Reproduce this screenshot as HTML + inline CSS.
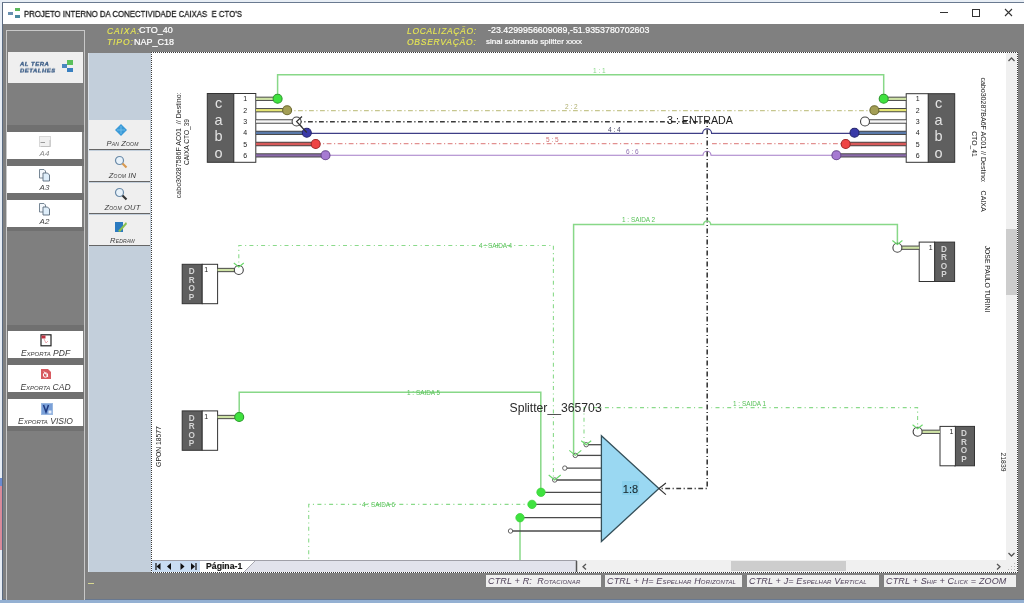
<!DOCTYPE html>
<html><head><meta charset="utf-8">
<style>
*{margin:0;padding:0;box-sizing:border-box}
body>*{will-change:transform}
html,body{width:1024px;height:603px;overflow:hidden;background:#e8eef5;font-family:"Liberation Sans",sans-serif}
.a{position:absolute}
#win{left:2px;top:2px;width:1022px;height:598px;background:#808080;border-left:1px solid #5a6a80;border-top:1px solid #6a7a90;border-bottom:1px solid #687890}
#desk{left:0;top:0;width:2px;height:603px;background:#e6ecf4}
#title{left:3px;top:3px;width:1021px;height:21px;background:#fff}
.ttl{left:24px;top:8.5px;font-size:9px;color:#1a1a1a;-webkit-text-stroke:0.3px #1a1a1a;white-space:nowrap;transform:scaleX(0.865);transform-origin:0 0}
.lbl{font-style:italic;color:#e8e852;-webkit-text-stroke:0.1px #e8e852;font-size:8.5px;white-space:nowrap;letter-spacing:0.9px}
.val{color:#fff;font-size:9px;white-space:nowrap;-webkit-text-stroke:0.2px #fff}
.btn{background:#fff}
.sc{font-style:italic;font-variant:small-caps;font-size:8px;color:#333;white-space:nowrap;text-align:center}
#lp{left:6px;top:30px;width:79px;height:570px;border:1px solid #c8c8c8;border-bottom:none;background:#7f7f7f}
#p2{left:88px;top:53px;width:63px;height:519px;background:#c3cfdb;border-left:1px solid #dde3ea}
.pb{left:89px;width:61px;background:#efefef;border-bottom:1px solid #666}
#canvas{left:151px;top:52px;width:867px;height:521px;background:#fff;border:1px dotted #3a3a3a}
.hint{background:#efefef;height:12px;top:575px;font-style:italic;font-variant:small-caps;font-size:9px;letter-spacing:0.15px;color:#4e4058;white-space:nowrap;padding-left:2px;line-height:12px}
</style></head>
<body>
<div id="desk" class="a"></div>
<div class="a" style="left:0;top:600px;width:1024px;height:3px;background:#94b0d2"></div>
<div id="win" class="a"></div>
<div class="a" style="left:0;top:478px;width:2px;height:8px;background:#6a8ad0"></div>
<div class="a" style="left:0;top:486px;width:2px;height:64px;background:#d88a9a"></div>
<div id="title" class="a"></div>
<!-- title icon -->
<div class="a" style="left:15px;top:8px;width:5px;height:3px;background:#5cb85c"></div>
<div class="a" style="left:8px;top:12px;width:5px;height:3px;background:#6a90b0"></div>
<div class="a" style="left:15px;top:15px;width:5px;height:3px;background:#4a8aa0"></div>
<div class="a ttl">PROJETO INTERNO DA CONECTIVIDADE CAIXAS&nbsp; E CTO'S</div>
<!-- window buttons -->
<div class="a" style="left:940px;top:12px;width:8px;height:1.2px;background:#333"></div>
<div class="a" style="left:971.5px;top:9px;width:8px;height:8px;border:1.2px solid #333"></div>
<svg class="a" style="left:1004px;top:8px" width="9" height="9"><path d="M1 1L8 8M8 1L1 8" stroke="#333" stroke-width="1.1"/></svg>

<!-- header info -->
<div class="a lbl" style="left:107px;top:25.5px">CAIXA:</div>
<div class="a val" style="left:139px;top:25px">CTO_40</div>
<div class="a lbl" style="left:107px;top:36.8px">TIPO:</div>
<div class="a val" style="left:134px;top:36.5px">NAP_C18</div>
<div class="a lbl" style="left:407px;top:25.5px;letter-spacing:0.65px">LOCALIZAÇÃO:</div>
<div class="a val" style="left:487.5px;top:24.5px;font-size:8.9px">-23.4299956609089,-51.9353780702603</div>
<div class="a lbl" style="left:407px;top:37.2px;letter-spacing:0.75px">OBSERVAÇÃO:</div>
<div class="a val" style="left:486px;top:37px;font-size:8px">sinal sobrando splitter xxxx</div>

<!-- left panel -->
<div id="lp" class="a"></div>
<div class="a" style="left:8px;top:52px;width:75px;height:31px;background:#efefef"></div>
<div class="a" style="left:20px;top:61.3px;font-size:5.9px;line-height:6.6px;font-style:italic;font-weight:bold;color:#3a5c86;-webkit-text-stroke:0.35px #3a5c86;letter-spacing:0.55px;transform:scaleY(0.95);transform-origin:0 0">AL TERA<br>DETALHES</div>
<svg class="a" style="left:61px;top:59px" width="13" height="14"><rect x="6" y="1" width="6" height="5" fill="#5bc05b"/><rect x="1" y="5" width="5" height="4" fill="#4a88c0"/><rect x="6" y="9" width="6" height="4" fill="#3a80c0"/></svg>
<div class="a" style="left:7px;top:125px;width:77px;height:7px;background:#707070"></div>
<div class="a" style="left:7px;top:159px;width:77px;height:7px;background:#707070"></div>
<div class="a" style="left:7px;top:193px;width:77px;height:7px;background:#707070"></div>
<div class="a" style="left:7px;top:227px;width:77px;height:4px;background:#707070"></div>
<div class="a btn" style="left:7px;top:132px;width:75px;height:27px"></div>
<div class="a btn" style="left:7px;top:166px;width:75px;height:27px"></div>
<div class="a btn" style="left:7px;top:200px;width:75px;height:27px"></div>
<svg class="a" style="left:38px;top:135px" width="14" height="13"><rect x="1.5" y="1.5" width="11" height="10" fill="#f0f0f0" stroke="#d8d8d8"/><path d="M2.5 7.5H7" stroke="#9a9a9a"/><path d="M12 5V11.5H3" fill="none" stroke="#c0c0c0"/></svg>
<div class="a sc" style="left:7px;top:148.5px;width:75px;font-size:8px;color:#8a8a8a">A4</div>
<svg class="a" style="left:38px;top:168px" width="14" height="14"><path d="M1.5 1.5H6L7.5 3V10H1.5Z" fill="#f4f8fc" stroke="#6a7a8a" stroke-width="0.9"/><path d="M5 5H9.5L11.5 7V13H5Z" fill="#dfeefa" stroke="#5a6a7a" stroke-width="0.9"/></svg>
<div class="a sc" style="left:7px;top:182.5px;width:75px;font-size:8px;color:#444">A3</div>
<svg class="a" style="left:38px;top:202px" width="14" height="14"><path d="M1.5 1.5H6L7.5 3V10H1.5Z" fill="#f4f8fc" stroke="#6a7a8a" stroke-width="0.9"/><path d="M5 5H9.5L11.5 7V13H5Z" fill="#dfeefa" stroke="#5a6a7a" stroke-width="0.9"/></svg>
<div class="a sc" style="left:7px;top:216.5px;width:75px;font-size:8px;color:#444">A2</div>

<div class="a" style="left:7px;top:325px;width:77px;height:6px;background:#707070"></div>
<div class="a" style="left:7px;top:358px;width:77px;height:7px;background:#707070"></div>
<div class="a" style="left:7px;top:392px;width:77px;height:7px;background:#707070"></div>
<div class="a" style="left:7px;top:426px;width:77px;height:5px;background:#707070"></div>
<div class="a btn" style="left:8px;top:331px;width:75px;height:27px"></div>
<div class="a btn" style="left:8px;top:365px;width:75px;height:27px"></div>
<div class="a btn" style="left:8px;top:399px;width:75px;height:27px"></div>
<svg class="a" style="left:40px;top:334px" width="12" height="13"><rect x="1" y="0.8" width="10" height="11" fill="#fff" stroke="#222" stroke-width="1.2"/><rect x="1.5" y="1.5" width="4" height="3" fill="#c03040"/><path d="M4 5L6 9L8 7" fill="none" stroke="#e8a0a8" stroke-width="0.9"/></svg>
<div class="a sc" style="left:8px;top:347.8px;width:75px;font-size:8.5px;letter-spacing:0px;color:#3a3a3a">Exporta PDF</div>
<svg class="a" style="left:40px;top:368px" width="12" height="12"><path d="M1 1H8L11 4V11H1Z" fill="#d85a60"/><circle cx="5.5" cy="7" r="2.2" fill="none" stroke="#fff" stroke-width="1"/><path d="M4 3.5L8 9" stroke="#fff" stroke-width="0.9"/></svg>
<div class="a sc" style="left:8px;top:381.8px;width:75px;font-size:8.5px;letter-spacing:0px;color:#3a3a3a">Exporta CAD</div>
<svg class="a" style="left:40.5px;top:402.5px" width="12" height="12"><rect x="0.5" y="0.5" width="11" height="11" fill="#7aa0d8" stroke="#9ab8e0"/><path d="M2.5 2L5 9L7.5 2" fill="none" stroke="#1e3a80" stroke-width="1.5"/><rect x="7.5" y="7.5" width="3" height="3" fill="#e6eefa"/></svg>
<div class="a sc" style="left:8px;top:415.8px;width:75px;font-size:8.5px;letter-spacing:0px;color:#3a3a3a">Exporta VISIO</div>

<!-- panel 2 -->
<div id="p2" class="a"></div>
<div class="a pb" style="top:120px;height:30px"></div>
<div class="a pb" style="top:151px;height:31px"></div>
<div class="a pb" style="top:183px;height:31px"></div>
<div class="a pb" style="top:215px;height:31px"></div>
<svg class="a" style="left:114px;top:123px" width="14" height="14"><path d="M7 1L13 7L7 13L1 7Z" fill="#3a9ad8"/><path d="M7 3V11M3 7H11" stroke="#7cc4ee" stroke-width="0.8"/></svg>
<div class="a sc" style="left:91.5px;top:139px;width:61px;font-size:7.6px;letter-spacing:0.15px;color:#3a3a3a">Pan Zoom</div>
<svg class="a" style="left:114px;top:155px" width="14" height="14"><circle cx="5.5" cy="5.5" r="4" fill="#e8f2fa" stroke="#6a8aa8" stroke-width="1.2"/><path d="M8.5 8.5L12.5 12.5" stroke="#d89a50" stroke-width="2.2"/></svg>
<div class="a sc" style="left:91.5px;top:171px;width:61px;font-size:7.6px;letter-spacing:0.15px;color:#3a3a3a">Zoom IN</div>
<svg class="a" style="left:114px;top:187px" width="14" height="14"><circle cx="5.5" cy="5.5" r="4" fill="#e8f2fa" stroke="#6a8aa8" stroke-width="1.2"/><path d="M8.5 8.5L12.5 12.5" stroke="#333" stroke-width="2.2"/></svg>
<div class="a sc" style="left:91.5px;top:203px;width:61px;font-size:7.6px;letter-spacing:0.15px;color:#3a3a3a">Zoom OUT</div>
<svg class="a" style="left:114px;top:220px" width="14" height="14"><path d="M1 2H9V12H1Z" fill="#2a7ac0"/><path d="M4 11L12 2L13 4L6 12Z" fill="#8ac050"/></svg>
<div class="a sc" style="left:91.5px;top:236px;width:61px;font-size:7.6px;letter-spacing:0.15px;color:#3a3a3a">Redraw</div>

<!-- canvas -->
<div id="canvas" class="a"></div>
<svg class="a" style="will-change:transform;left:152px;top:53px;font-family:'Liberation Sans',sans-serif" width="854" height="507" viewBox="152 53 854 507">
<path d="M277.6 98.7V74.8H883.7V99" fill="none" stroke="#88d888" stroke-width="1.5"/>
<text x="593" y="72.5" font-size="6.5" fill="#8ad88a" text-anchor="start" >1 : 1</text>
<path d="M287 110.6H874" fill="none" stroke="#c6c68e" stroke-width="1.3" stroke-dasharray="4.8 2.5 1.2 2.5"/>
<text x="565" y="108.5" font-size="6.5" fill="#b0b070" text-anchor="start" >2 : 2</text>
<path d="M306.8 133.3H702.6A4.5 4.5 0 0 1 711.6 133.3H854.5" fill="none" stroke="#3e3e86" stroke-width="1.2"/>
<text x="608" y="131.5" font-size="6.5" fill="#404060" text-anchor="start" >4 : 4</text>
<path d="M315.7 143.6H702M712 143.6H845.7" fill="none" stroke="#e29090" stroke-width="1.3" stroke-dasharray="4.8 2.5 1.2 2.5"/>
<text x="546" y="141.5" font-size="6.5" fill="#d07070" text-anchor="start" >5 : 5</text>
<path d="M325.5 155.3H703A4 4 0 0 1 711 155.3H836.4" fill="none" stroke="#a47cc8" stroke-width="1.1"/>
<text x="626" y="153.5" font-size="6.5" fill="#9070b0" text-anchor="start" >6 : 6</text>
<path d="M297 121.8H707.2V488.5H659" fill="none" stroke="#3a3a3a" stroke-width="1.6" stroke-dasharray="4.8 2.5 1.2 2.5"/>
<path d="M897.4 247.7V224.5H710.7A3.6 3.6 0 0 0 703.5 224.5H573.6V455.4" fill="none" stroke="#88d888" stroke-width="1.5"/>
<text x="622" y="221.5" font-size="6.4" fill="#58c258" text-anchor="start" >1 : SAIDA 2</text>
<path d="M238.8 270V245.5H553.4V480" fill="none" stroke="#8ada8a" stroke-width="1.1" stroke-dasharray="4 3.4 1.1 3.2"/>
<text x="479" y="247.5" font-size="6.4" fill="#58c258" text-anchor="start" >4 : SAIDA 4</text>
<path d="M239.2 417V392.3H540.8V492.3" fill="none" stroke="#88d888" stroke-width="1.5"/>
<text x="407" y="394.5" font-size="6.4" fill="#58c258" text-anchor="start" >1 : SAIDA 5</text>
<path d="M917.6 431.8V407.6H711.5M702.5 407.6H584V444.7" fill="none" stroke="#8ada8a" stroke-width="1.1" stroke-dasharray="4 3.4 1.1 3.2"/>
<text x="733" y="405.5" font-size="6.4" fill="#58c258" text-anchor="start" >1 : SAIDA 1</text>
<path d="M532 504.4H308.7V560" fill="none" stroke="#8ada8a" stroke-width="1.1" stroke-dasharray="4 3.4 1.1 3.2"/>
<text x="362" y="506.5" font-size="6.4" fill="#58c258" text-anchor="start" >4 : SAIDA 6</text>
<path d="M520 517.7V560" fill="none" stroke="#88d888" stroke-width="1.5"/>
<rect x="207.3" y="93.5" width="26.5" height="68.8" fill="#5f5f5f" stroke="#333" stroke-width="1"/>
<rect x="233.8" y="93.5" width="22" height="68.8" fill="#fff" stroke="#333" stroke-width="1"/>
<text x="218.6" y="108" font-size="14.5" fill="#e4e4e4" text-anchor="middle" >c</text>
<text x="218.6" y="124.8" font-size="14.5" fill="#e4e4e4" text-anchor="middle" >a</text>
<text x="218.6" y="141.3" font-size="14.5" fill="#e4e4e4" text-anchor="middle" >b</text>
<text x="218.6" y="158" font-size="14.5" fill="#e4e4e4" text-anchor="middle" >o</text>
<text x="245.3" y="101.3" font-size="7" fill="#222" text-anchor="middle" >1</text>
<text x="245.3" y="112.7" font-size="7" fill="#222" text-anchor="middle" >2</text>
<text x="245.3" y="124" font-size="7" fill="#222" text-anchor="middle" >3</text>
<text x="245.3" y="135.3" font-size="7" fill="#222" text-anchor="middle" >4</text>
<text x="245.3" y="146.5" font-size="7" fill="#222" text-anchor="middle" >5</text>
<text x="245.3" y="157.8" font-size="7" fill="#222" text-anchor="middle" >6</text>
<rect x="928.2" y="93.7" width="26.5" height="68.6" fill="#5f5f5f" stroke="#333" stroke-width="1"/>
<rect x="906.2" y="93.7" width="22" height="68.6" fill="#fff" stroke="#333" stroke-width="1"/>
<text x="938.5" y="108" font-size="14.5" fill="#e4e4e4" text-anchor="middle" >c</text>
<text x="938.5" y="124.8" font-size="14.5" fill="#e4e4e4" text-anchor="middle" >a</text>
<text x="938.5" y="141.3" font-size="14.5" fill="#e4e4e4" text-anchor="middle" >b</text>
<text x="938.5" y="158" font-size="14.5" fill="#e4e4e4" text-anchor="middle" >o</text>
<text x="917.7" y="101.3" font-size="7" fill="#222" text-anchor="middle" >1</text>
<text x="917.7" y="112.7" font-size="7" fill="#222" text-anchor="middle" >2</text>
<text x="917.7" y="124" font-size="7" fill="#222" text-anchor="middle" >3</text>
<text x="917.7" y="135.3" font-size="7" fill="#222" text-anchor="middle" >4</text>
<text x="917.7" y="146.5" font-size="7" fill="#222" text-anchor="middle" >5</text>
<text x="917.7" y="157.8" font-size="7" fill="#222" text-anchor="middle" >6</text>
<path d="M256 98.8H277.6" stroke="#4a4a4a" stroke-width="4.3" fill="none"/>
<path d="M256 98.8H277.6" stroke="#cfe3a6" stroke-width="2.3" fill="none"/>
<path d="M883.7 98.8H906.2" stroke="#4a4a4a" stroke-width="4.3" fill="none"/>
<path d="M883.7 98.8H906.2" stroke="#cfe3a6" stroke-width="2.3" fill="none"/>
<path d="M256 110.2H287.1" stroke="#4a4a4a" stroke-width="4.3" fill="none"/>
<path d="M256 110.2H287.1" stroke="#e6e674" stroke-width="2.3" fill="none"/>
<path d="M874.4 110.2H906.2" stroke="#4a4a4a" stroke-width="4.3" fill="none"/>
<path d="M874.4 110.2H906.2" stroke="#e6e674" stroke-width="2.3" fill="none"/>
<path d="M256 121.5H296.6" stroke="#4a4a4a" stroke-width="4.3" fill="none"/>
<path d="M256 121.5H296.6" stroke="#f6f6f6" stroke-width="2.3" fill="none"/>
<path d="M865 121.5H906.2" stroke="#4a4a4a" stroke-width="4.3" fill="none"/>
<path d="M865 121.5H906.2" stroke="#f6f6f6" stroke-width="2.3" fill="none"/>
<path d="M256 132.8H306.8" stroke="#4a4a4a" stroke-width="4.3" fill="none"/>
<path d="M256 132.8H306.8" stroke="#5a7aaa" stroke-width="2.3" fill="none"/>
<path d="M854.5 132.8H906.2" stroke="#4a4a4a" stroke-width="4.3" fill="none"/>
<path d="M854.5 132.8H906.2" stroke="#5a7aaa" stroke-width="2.3" fill="none"/>
<path d="M256 144H315.7" stroke="#4a4a4a" stroke-width="4.3" fill="none"/>
<path d="M256 144H315.7" stroke="#d85a5a" stroke-width="2.3" fill="none"/>
<path d="M845.7 144H906.2" stroke="#4a4a4a" stroke-width="4.3" fill="none"/>
<path d="M845.7 144H906.2" stroke="#d85a5a" stroke-width="2.3" fill="none"/>
<path d="M256 155.3H325.5" stroke="#4a4a4a" stroke-width="4.3" fill="none"/>
<path d="M256 155.3H325.5" stroke="#8a6aaa" stroke-width="2.3" fill="none"/>
<path d="M836.4 155.3H906.2" stroke="#4a4a4a" stroke-width="4.3" fill="none"/>
<path d="M836.4 155.3H906.2" stroke="#8a6aaa" stroke-width="2.3" fill="none"/>
<circle cx="277.6" cy="98.8" r="4.5" fill="#3fe23f" stroke="#2e9a2e" stroke-width="1.1"/>
<circle cx="883.7" cy="98.8" r="4.5" fill="#3fe23f" stroke="#2e9a2e" stroke-width="1.1"/>
<circle cx="287.1" cy="110.2" r="4.5" fill="#a39e55" stroke="#6e6a30" stroke-width="1.1"/>
<circle cx="874.4" cy="110.2" r="4.5" fill="#a39e55" stroke="#6e6a30" stroke-width="1.1"/>
<circle cx="296.6" cy="121.5" r="4.5" fill="#ffffff" stroke="#444444" stroke-width="1.1"/>
<circle cx="865" cy="121.5" r="4.5" fill="#ffffff" stroke="#444444" stroke-width="1.1"/>
<circle cx="306.8" cy="132.8" r="4.5" fill="#3a3aa8" stroke="#26266e" stroke-width="1.1"/>
<circle cx="854.5" cy="132.8" r="4.5" fill="#3a3aa8" stroke="#26266e" stroke-width="1.1"/>
<circle cx="315.7" cy="144" r="4.5" fill="#ef4545" stroke="#a02a2a" stroke-width="1.1"/>
<circle cx="845.7" cy="144" r="4.5" fill="#ef4545" stroke="#a02a2a" stroke-width="1.1"/>
<circle cx="325.5" cy="155.3" r="4.5" fill="#a67ad2" stroke="#6a4a90" stroke-width="1.1"/>
<circle cx="836.4" cy="155.3" r="4.5" fill="#a67ad2" stroke="#6a4a90" stroke-width="1.1"/>
<path d="M302 116.5L296.6 121.6L302 127M296.6 121.6L306.8 132.5" fill="none" stroke="#333" stroke-width="1.2"/>
<rect x="182.2" y="264.3" width="20" height="39.4" fill="#5f5f5f" stroke="#333" stroke-width="1"/>
<rect x="202.2" y="264.3" width="15.4" height="39.4" fill="#fff" stroke="#333" stroke-width="1"/>
<text x="191.6" y="274.1" font-size="8.2" fill="#d4d4d4" text-anchor="middle" font-weight="bold">D</text>
<text x="191.6" y="282.6" font-size="8.2" fill="#d4d4d4" text-anchor="middle" font-weight="bold">R</text>
<text x="191.6" y="291.1" font-size="8.2" fill="#d4d4d4" text-anchor="middle" font-weight="bold">O</text>
<text x="191.6" y="299.6" font-size="8.2" fill="#d4d4d4" text-anchor="middle" font-weight="bold">P</text>
<text x="206.2" y="272.3" font-size="7" fill="#222" text-anchor="middle" >1</text>
<rect x="182.2" y="410.9" width="20" height="39.4" fill="#5f5f5f" stroke="#333" stroke-width="1"/>
<rect x="202.2" y="410.9" width="15.4" height="39.4" fill="#fff" stroke="#333" stroke-width="1"/>
<text x="191.6" y="420.7" font-size="8.2" fill="#d4d4d4" text-anchor="middle" font-weight="bold">D</text>
<text x="191.6" y="429.2" font-size="8.2" fill="#d4d4d4" text-anchor="middle" font-weight="bold">R</text>
<text x="191.6" y="437.7" font-size="8.2" fill="#d4d4d4" text-anchor="middle" font-weight="bold">O</text>
<text x="191.6" y="446.2" font-size="8.2" fill="#d4d4d4" text-anchor="middle" font-weight="bold">P</text>
<text x="206.2" y="418.9" font-size="7" fill="#222" text-anchor="middle" >1</text>
<rect x="934.6" y="242.1" width="20" height="39.4" fill="#5f5f5f" stroke="#333" stroke-width="1"/>
<rect x="919.2" y="242.1" width="15.4" height="39.4" fill="#fff" stroke="#333" stroke-width="1"/>
<text x="944" y="251.9" font-size="8.2" fill="#d4d4d4" text-anchor="middle" font-weight="bold">D</text>
<text x="944" y="260.4" font-size="8.2" fill="#d4d4d4" text-anchor="middle" font-weight="bold">R</text>
<text x="944" y="268.9" font-size="8.2" fill="#d4d4d4" text-anchor="middle" font-weight="bold">O</text>
<text x="944" y="277.4" font-size="8.2" fill="#d4d4d4" text-anchor="middle" font-weight="bold">P</text>
<text x="930.7" y="250.1" font-size="7" fill="#222" text-anchor="middle" >1</text>
<rect x="954.5" y="426.4" width="20" height="39.4" fill="#5f5f5f" stroke="#333" stroke-width="1"/>
<rect x="940" y="426.4" width="15.4" height="39.4" fill="#fff" stroke="#333" stroke-width="1"/>
<text x="963.9" y="436.2" font-size="8.2" fill="#d4d4d4" text-anchor="middle" font-weight="bold">D</text>
<text x="963.9" y="444.7" font-size="8.2" fill="#d4d4d4" text-anchor="middle" font-weight="bold">R</text>
<text x="963.9" y="453.2" font-size="8.2" fill="#d4d4d4" text-anchor="middle" font-weight="bold">O</text>
<text x="963.9" y="461.7" font-size="8.2" fill="#d4d4d4" text-anchor="middle" font-weight="bold">P</text>
<text x="951.5" y="434.4" font-size="7" fill="#222" text-anchor="middle" >1</text>
<path d="M217.6 270H234.5" stroke="#4a4a4a" stroke-width="4.3" fill="none"/>
<path d="M217.6 270H234.5" stroke="#cfe3a6" stroke-width="2.3" fill="none"/>
<path d="M217.6 417H235" stroke="#4a4a4a" stroke-width="4.3" fill="none"/>
<path d="M217.6 417H235" stroke="#cfe3a6" stroke-width="2.3" fill="none"/>
<path d="M901.7 247.7H919.2" stroke="#4a4a4a" stroke-width="4.3" fill="none"/>
<path d="M901.7 247.7H919.2" stroke="#cfe3a6" stroke-width="2.3" fill="none"/>
<path d="M921.9 431.8H940" stroke="#4a4a4a" stroke-width="4.3" fill="none"/>
<path d="M921.9 431.8H940" stroke="#cfe3a6" stroke-width="2.3" fill="none"/>
<circle cx="238.8" cy="270" r="4.5" fill="#fff" stroke="#444" stroke-width="1.1"/>
<circle cx="239.2" cy="417" r="4.5" fill="#3fe23f" stroke="#2e9a2e" stroke-width="1.1"/>
<circle cx="897.4" cy="247.7" r="4.5" fill="#fff" stroke="#444" stroke-width="1.1"/>
<circle cx="917.6" cy="431.8" r="4.5" fill="#fff" stroke="#444" stroke-width="1.1"/>
<path d="M233.8 263L238.8 267L243.8 263" fill="none" stroke="#6ad86a" stroke-width="1.1"/>
<path d="M892.4 240.5L897.4 244.5L902.4 240.5" fill="none" stroke="#6ad86a" stroke-width="1.1"/>
<path d="M912.6 424.8L917.6 428.8L922.6 424.8" fill="none" stroke="#6ad86a" stroke-width="1.1"/>
<path d="M586.2 444.7H601.4" stroke="#4a4a4a" stroke-width="1.3"/>
<path d="M575.3 455.4H601.4" stroke="#4a4a4a" stroke-width="1.3"/>
<path d="M564.8 468.1H601.4" stroke="#4a4a4a" stroke-width="1.3"/>
<path d="M554.7 480H601.4" stroke="#4a4a4a" stroke-width="1.3"/>
<path d="M541 492.3H601.4" stroke="#4a4a4a" stroke-width="1.3"/>
<path d="M532 504.4H601.4" stroke="#4a4a4a" stroke-width="1.3"/>
<path d="M520 517.7H601.4" stroke="#4a4a4a" stroke-width="1.3"/>
<path d="M510.5 531H601.4" stroke="#4a4a4a" stroke-width="1.3"/>
<path d="M601.4 435.7V541.5L658.9 488.5Z" fill="#9ad8f2" stroke="#35505a" stroke-width="1.3"/>
<rect x="622" y="481" width="17" height="14" fill="#8ad0ec"/>
<text x="630.5" y="492.5" font-size="11" fill="#1a2a30" text-anchor="middle" stroke="#1a2a30" stroke-width="0.12">1:8</text>
<path d="M665.9 483.1L658.9 488.5L665.9 494.6" fill="none" stroke="#333" stroke-width="1.2"/>
<circle cx="586.2" cy="444.7" r="2.2" fill="#fff" stroke="#555" stroke-width="0.9"/>
<circle cx="575.3" cy="455.4" r="2.2" fill="#fff" stroke="#555" stroke-width="0.9"/>
<circle cx="564.8" cy="468.1" r="2.2" fill="#fff" stroke="#555" stroke-width="0.9"/>
<circle cx="554.7" cy="480" r="2.2" fill="#fff" stroke="#555" stroke-width="0.9"/>
<circle cx="510.5" cy="531" r="2.2" fill="#fff" stroke="#555" stroke-width="0.9"/>
<circle cx="541" cy="492.3" r="4.2" fill="#3fe23f" stroke="#3fd23f" stroke-width="0.8"/>
<circle cx="532" cy="504.4" r="4.2" fill="#3fe23f" stroke="#3fd23f" stroke-width="0.8"/>
<circle cx="520" cy="517.7" r="4.2" fill="#3fe23f" stroke="#3fd23f" stroke-width="0.8"/>
<path d="M581.2 440.7L586.2 444.7L591.2 440.7" fill="none" stroke="#6ad86a" stroke-width="1.1"/>
<path d="M569.3 450.4L575.3 455.4L581.3 450.4" fill="none" stroke="#6ad86a" stroke-width="1.1"/>
<path d="M548.7 475L554.7 480L560.7 475" fill="none" stroke="#6ad86a" stroke-width="1.1"/>
<text x="509.5" y="412.4" font-size="12.2" fill="#2a2a2a" text-anchor="start" >Splitter__365703</text>
<text x="667" y="123.8" font-size="10.7" fill="#222" text-anchor="start" >3 : ENTRADA</text>
<text x="179" y="145.3" font-size="7.05" fill="#222" text-anchor="middle" transform="rotate(-90 179 145.3)" dominant-baseline="central">cabo30287586F AC01&#160;&#160;// Destino:</text>
<text x="186.6" y="142" font-size="6.6" fill="#222" text-anchor="middle" transform="rotate(-90 186.6 142)" dominant-baseline="central">CAIXA CTO_39</text>
<text x="983" y="144.6" font-size="7.05" fill="#222" text-anchor="middle" transform="rotate(90 983 144.6)" dominant-baseline="central">cabo30287BA6F AC01 // Destino:&#160;&#160;&#160;&#160;CAIXA</text>
<text x="974" y="144" font-size="6.8" fill="#222" text-anchor="middle" transform="rotate(90 974 144)" dominant-baseline="central">CTO_41</text>
<text x="987" y="279" font-size="6.8" fill="#222" text-anchor="middle" transform="rotate(90 987 279)" dominant-baseline="central">JOSE PAULO TURINI</text>
<text x="158" y="446.5" font-size="6.8" fill="#222" text-anchor="middle" transform="rotate(-90 158 446.5)" dominant-baseline="central">GPON 18577</text>
<text x="1003" y="462" font-size="6.8" fill="#222" text-anchor="middle" transform="rotate(90 1003 462)" dominant-baseline="central">21839</text>
</svg>


<!-- vertical scrollbar -->
<div class="a" style="left:1006px;top:53px;width:11px;height:519px;background:#f0f0f0"></div>
<svg class="a" style="left:1006px;top:561px" width="11" height="11"><g fill="#b8b8b8"><rect x="8" y="2" width="1" height="1"/><rect x="8" y="5" width="1" height="1"/><rect x="8" y="8" width="1" height="1"/><rect x="5" y="5" width="1" height="1"/><rect x="5" y="8" width="1" height="1"/><rect x="2" y="8" width="1" height="1"/></g></svg>
<div class="a" style="left:1006px;top:229px;width:11px;height:66px;background:#cdcdcd"></div>
<svg class="a" style="left:1006px;top:53px" width="11" height="508"><path d="M2.5 8L5.5 5L8.5 8" fill="none" stroke="#555" stroke-width="1.3"/><path d="M2.5 500L5.5 503L8.5 500" fill="none" stroke="#555" stroke-width="1.3"/></svg>
<!-- bottom bar -->
<div class="a" style="left:152px;top:560px;width:854px;height:12px;background:#f0f0f0"></div>
<div class="a" style="left:152px;top:560px;width:425px;height:12px;background:#e2e3ec;border-top:1px solid #a0a0a8"></div>
<div class="a" style="left:152px;top:561px;width:48px;height:11px;background:#c9ddf3"></div>
<svg class="a" style="left:152px;top:560px" width="426" height="12">
<path d="M4 3V10" stroke="#111" stroke-width="1.2"/><path d="M8.5 3V10L4.5 6.5Z" fill="#111"/>
<path d="M19 3V10L15 6.5Z" fill="#111"/>
<path d="M28.5 3V10L32.5 6.5Z" fill="#111"/>
<path d="M39 3V10L43 6.5Z" fill="#111"/><path d="M44 3V10" stroke="#111" stroke-width="1.2"/>
<path d="M48 12V1H103L92 12Z" fill="#fff"/>
<path d="M103 1L92 12" stroke="#a8a8b0" stroke-width="1"/>
<path d="M424.5 1V12" stroke="#555" stroke-width="1.5"/>
</svg>
<div class="a" style="left:205.5px;top:561.3px;font-size:8.7px;font-weight:bold;color:#1a1a1a;line-height:11px;-webkit-text-stroke:0.2px #1a1a1a">Página-1</div>
<div class="a" style="left:731px;top:561px;width:115px;height:10px;background:#cdcdcd"></div>
<svg class="a" style="left:578px;top:560px" width="440" height="13"><path d="M8 4L5 6.8L8 9.6" fill="none" stroke="#555" stroke-width="1.3"/><path d="M419 4L422 6.8L419 9.6" fill="none" stroke="#555" stroke-width="1.3"/></svg>

<div class="a" style="left:88px;top:582.5px;width:6px;height:1.3px;background:#d8d890"></div>
<!-- hints -->
<div class="a hint" style="left:486px;width:115px">CTRL + R:&nbsp; Rotacionar</div>
<div class="a hint" style="left:605px;width:137px">CTRL + H= Espelhar Horizontal</div>
<div class="a hint" style="left:747px;width:132px">CTRL + J= Espelhar Vertical</div>
<div class="a hint" style="left:884px;width:132px">CTRL + Shif + Click = ZOOM</div>
</body></html>
